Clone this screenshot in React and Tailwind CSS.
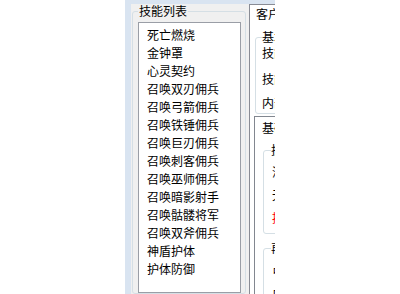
export default function App() {
  const skills = [
    "死亡燃烧",
    "金钟罩",
    "心灵契约",
    "召唤双刃佣兵",
    "召唤弓箭佣兵",
    "召唤铁锤佣兵",
    "召唤巨刃佣兵",
    "召唤刺客佣兵",
    "召唤巫师佣兵",
    "召唤暗影射手",
    "召唤骷髅将军",
    "召唤双斧佣兵",
    "神盾护体",
    "护体防御",
  ];
  const font = { fontFamily: '"Noto Sans CJK SC", "Noto Sans", sans-serif' };
  return (
    <div
      className="w-[400px] h-[294px] bg-white flex overflow-hidden text-[12px] text-black"
      style={font}
    >
      <div className="w-[125px] shrink-0" />
      <div className="w-[150px] shrink-0 h-full bg-[#d9e4f1] pl-[6px] pt-[4px] flex overflow-hidden">
        <div className="flex-1 min-w-0 flex bg-[#f0f0f0]">
          {/* left group */}
          <div className="w-[118px] shrink-0 flex flex-col">
            <div className="ml-[1px] mt-[7px] w-[114px] flex-1 border border-[#d5dfe5] rounded-[3px] flex flex-col">
              <div className="-mt-[8px] ml-[5px] px-[1px] w-fit bg-[#f0f0f0] leading-[14px] h-[14px]">
                技能列表
              </div>
              <div className="ml-[5px] mt-[4px] w-[103px] flex-1 border border-[#9a9ea6] bg-white pt-[3px] pl-[8px]">
                {skills.map((s) => (
                  <div key={s} className="h-[18px] leading-[18px] whitespace-nowrap">
                    {s}
                  </div>
                ))}
              </div>
            </div>
          </div>
          {/* right tab control, clipped */}
          <div className="flex-1 min-w-0 overflow-hidden bg-white border-l border-t border-[#898c95]">
            <div className="w-[200px] flex flex-col">
              <div className="h-[18px] pl-[6px] pt-[1px] leading-[16px] whitespace-nowrap">客户信息</div>
              <div className="ml-[5px] mt-[14px] w-[150px] h-[77px] border border-[#d5dfe5] rounded-[3px] flex flex-col pl-[6px]">
                <div className="-mt-[8px] w-fit bg-white leading-[14px] h-[14px] whitespace-nowrap">基本信息</div>
                <div className="mt-[2px] leading-[14px] h-[14px] whitespace-nowrap">技能名称</div>
                <div className="mt-[12px] leading-[14px] h-[14px] whitespace-nowrap">技能等级</div>
                <div className="mt-[10px] leading-[14px] h-[14px] whitespace-nowrap">内部编号</div>
              </div>
              <div className="ml-[4px] mt-[2px] w-[170px] h-[200px] border border-[#828790] flex flex-col">
                <div className="pl-[7px] pt-[4px] leading-[14px] h-[18px] whitespace-nowrap">基础属性</div>
                <div className="ml-[8px] mt-[15px] w-[140px] border border-[#d5dfe5] rounded-[3px] flex flex-col pb-[8px]">
                  <div className="-mt-[8px] ml-[7px] w-fit bg-white leading-[14px] h-[14px] whitespace-nowrap">技能效果</div>
                  <div className="ml-[8px] mt-[8px] leading-[14px] h-[14px] whitespace-nowrap">消耗魔法</div>
                  <div className="ml-[8px] mt-[9px] leading-[14px] h-[14px] whitespace-nowrap">无视防御</div>
                  <div className="ml-[8px] mt-[9px] leading-[14px] h-[14px] whitespace-nowrap text-[#ff0000]">持续时间</div>
                </div>
                <div className="ml-[8px] mt-[14px] w-[140px] h-[80px] border border-[#d5dfe5] rounded-[3px] flex flex-col">
                  <div className="-mt-[8px] ml-[7px] w-fit bg-white leading-[14px] h-[14px] whitespace-nowrap">再生属性</div>
                  <div className="ml-[8px] mt-[6px] leading-[14px] h-[14px] whitespace-nowrap">占用时间</div>
                  <div className="ml-[8px] mt-[8px] leading-[14px] h-[14px] whitespace-nowrap">占位数值</div>
                </div>
              </div>
            </div>
          </div>
        </div>
      </div>
      <div className="flex-1" />
    </div>
  );
}
